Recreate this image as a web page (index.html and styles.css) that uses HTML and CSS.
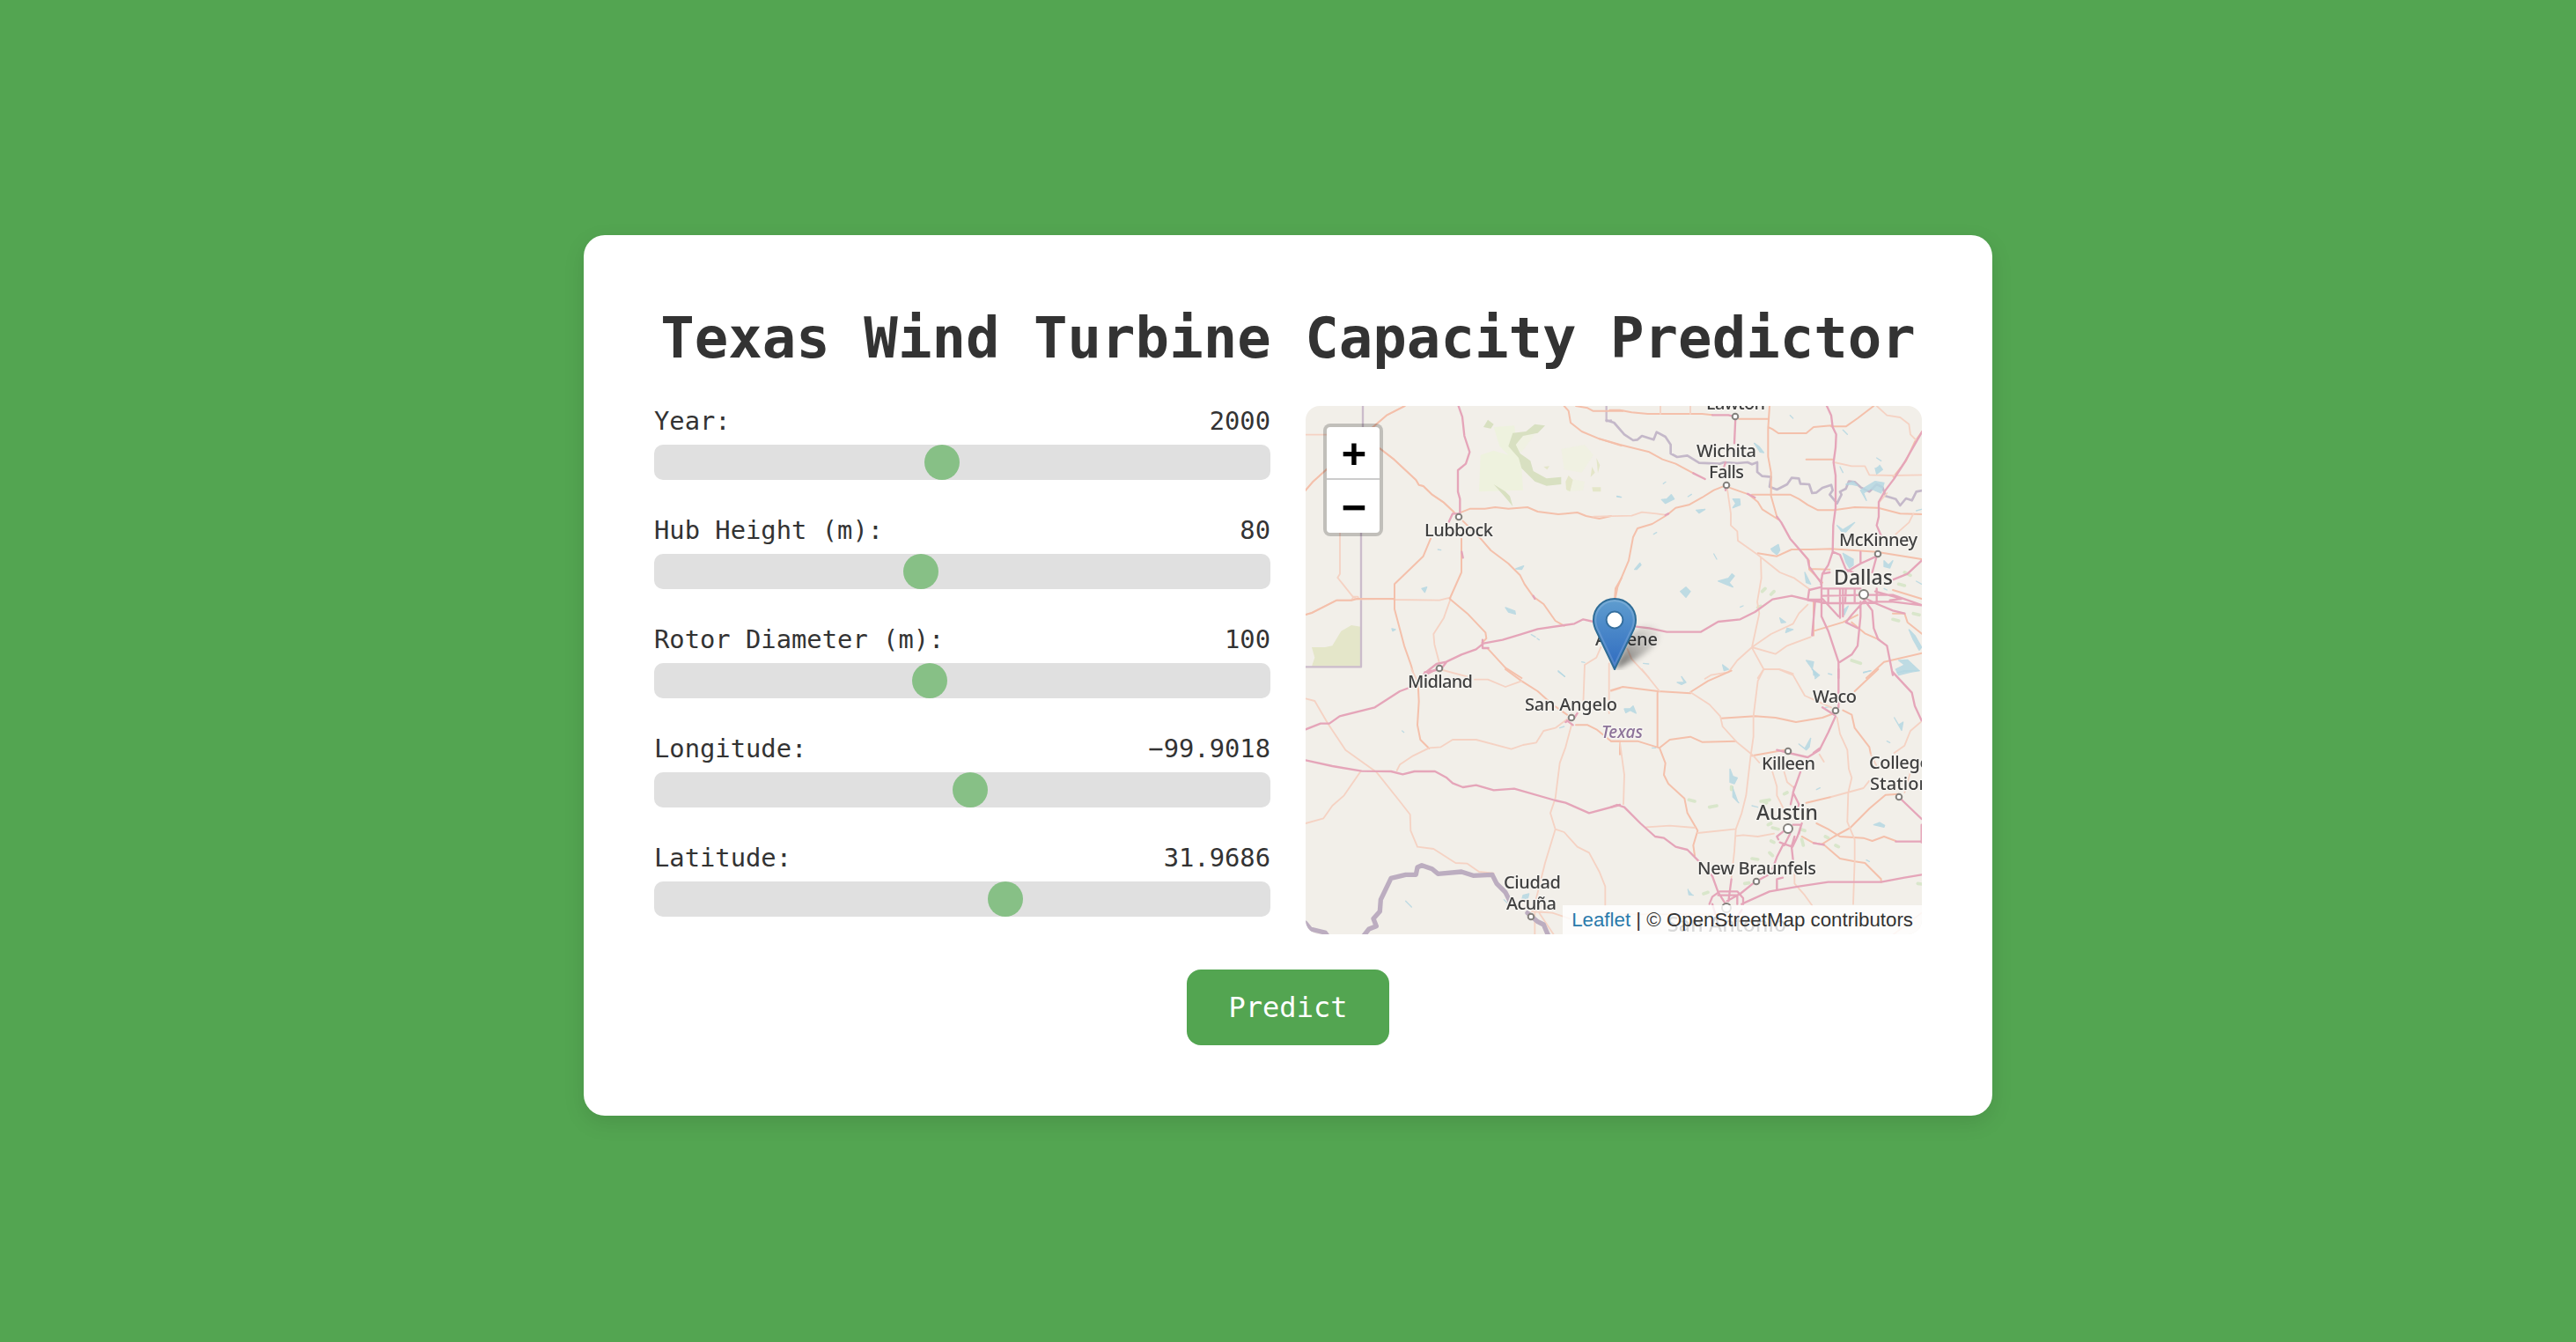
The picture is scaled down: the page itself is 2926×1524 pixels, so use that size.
FILE: index.html
```html
<!DOCTYPE html>
<html lang="en">
<head>
<meta charset="utf-8">
<title>Texas Wind Turbine Capacity Predictor</title>
<link rel="stylesheet" href="styles.css">
</head>
<body>
<main class="card">
  <h1 class="title">Texas Wind Turbine Capacity Predictor</h1>
  <div class="columns">
    <form class="sliders">
      <div class="field">
        <div class="field-head"><label>Year:</label><output>2000</output></div>
        <div class="track"><span class="thumb" style="margin-left:307px"></span></div>
      </div>
      <div class="field">
        <div class="field-head"><label>Hub Height (m):</label><output>80</output></div>
        <div class="track"><span class="thumb" style="margin-left:283px"></span></div>
      </div>
      <div class="field">
        <div class="field-head"><label>Rotor Diameter (m):</label><output>100</output></div>
        <div class="track"><span class="thumb" style="margin-left:293px"></span></div>
      </div>
      <div class="field">
        <div class="field-head"><label>Longitude:</label><output>−99.9018</output></div>
        <div class="track"><span class="thumb" style="margin-left:339px"></span></div>
      </div>
      <div class="field">
        <div class="field-head"><label>Latitude:</label><output>31.9686</output></div>
        <div class="track"><span class="thumb" style="margin-left:379px"></span></div>
      </div>
    </form>

    <div class="map">
      <svg class="tiles" viewBox="0 0 700 600" width="700" height="600">
        <!-- north-west -->
        <g transform="translate(-3 -11) scale(.33333)">
          <path class="wood" d="M30 855H75L100 850 130 800 165 780 197 785V920H30L40 890Z"/>
          <path class="grass" d="M650 105L720 100 735 200 745 240 750 320 600 325 605 200 650 185 700 200 670 170Z"/>
          <path class="grass" d="M720 130L790 130 745 190 700 190ZM900 280L960 290 955 320 900 325ZM880 180L960 165 990 200 950 260 890 250Z" opacity=".6"/>
          <path class="wood2" d="M615 105L630 80 650 95 640 110ZM715 125L760 120 790 95 825 100 800 125 750 135 725 165 740 195 775 220 785 255 830 280 880 275 880 300 830 305 790 290 745 245 735 210 700 170ZM650 300L690 325 705 340 715 375 690 345Z"/>
          <path class="wood" d="M895 290L905 270 920 285 910 325 897 318ZM985 310H1015V325H988ZM1000 210L1012 235 1005 262ZM985 240L995 260 980 275ZM820 240L840 238 832 250ZM890 175L900 188ZM950 172L958 180Z"/>
          <path class="water" d="M405 655L422 650 415 668ZM690 720L722 732 724 742 700 735ZM303 792L315 795 306 800ZM725 588L752 578 745 590ZM460 522L470 524ZM778 812L792 820M798 825L805 830M870 935L892 955ZM950 905L960 907M1070 340L1085 344"/>
          <path class="state" d="M204 30V250L198 460V922H0M1034 30V85L1050 82"/>
          <path class="minor" d="M0 131H80M347 33L285 65 235 108M262 178L310 215 385 285 395 302 410 306 440 335 480 362 515 395M85 245L35 290 5 325M126 465V605L118 618 170 683 185 692 310 690M310 693L465 695 502 686M503 690L480 755 445 810 448 845 465 910M5 745L30 738 115 695 165 695 172 683 187 683 190 690"/>
          <path class="road" d="M347 33L285 65 235 108M262 178L310 215 385 285 395 302 410 306 440 335 480 362 515 395M85 245L35 290 5 325M5 745L30 738 115 695 165 695 185 690H310M540 395L570 383H620L655 378 700 383 765 378 800 393 870 402 935 396 965 408 1010 417 1050 408M435 485L410 545 312 640V725L345 850 368 915 375 940M540 485L540 600 500 690 560 740 622 805 625 825 610 840M545 425L610 490 640 525 700 570 740 610 755 640 785 683 820 708 860 765 890 782M630 860L690 925 745 960M1085 620L1065 655 1062 695M890 33L905 50 912 90 950 120 1010 145 1085 168M930 33L970 40 988 50H1090"/>
          <path class="minor" d="M1015 855L1000 890 960 915 955 1050M1043 910V1080M465 930L560 955M370 930L395 980"/>
          <path class="major" d="M530 33L543 70 550 135 568 190 555 230 528 252V325L535 350V400M535 400L510 400 497 428M541 530L545 550M785 680L790 690M413 945L455 912 488 905 540 880 590 862 615 842 680 830 740 812 800 793 890 780 925 775 955 760 990 768M415 940L470 930 488 907M612 830V858H632"/>
        </g>
        <!-- north-east -->
        <g transform="translate(347 -11) scale(.33333)">
          <path class="river" d="M-16 82L10 90 45 130 75 150 90 148 105 135 145 148 155 122 185 138 203 165V195L225 207 260 202 300 227 370 230 385 225 430 228 465 225 480 232 498 225V258L515 272 545 275 540 308 565 318 600 300 615 278 640 280 645 298 675 300 685 330 700 328 720 312 750 302 755 320 745 335 770 365 785 335 780 325 800 315 810 290 830 292 850 310 880 325 905 300 925 310 935 340 970 350 985 372 1005 348 1025 355 1040 325 1065 320"/>
          <path class="water" d="M488 160L505 172 520 192 508 190ZM172 352L190 350 205 335 215 350 185 365ZM415 350L438 350 440 370 415 380 425 365ZM290 388L320 385 300 398ZM80 590L98 568 102 575 88 590ZM365 630L400 620 412 605 420 612 402 635 415 650 390 640ZM236 665L255 650 270 665 255 685ZM545 520L570 505 575 525 565 540 550 528ZM350 537L360 555M145 470L155 464M770 440L790 455 830 430 800 462 785 460ZM790 535L825 555 825 575 812 585 800 565ZM930 560L945 575 960 560 950 585 930 580ZM660 600L680 640 665 635ZM905 210L920 220M915 235L925 250 905 265 900 245M800 300L825 290 840 305 820 300ZM850 320L900 290 930 295 920 330 885 315 860 330 870 355ZM780 240L790 260M610 65L620 75M790 115L805 130M575 755L595 770 580 772ZM600 790L620 795 595 805ZM665 900L690 905 685 930 705 950 690 950 690 935ZM380 915L400 930 385 935ZM1015 795L1035 815 1058 855 1050 865 1030 830ZM970 930L1000 915 980 900 1010 898 1050 935 1020 940 980 950ZM860 940L885 935M178 298L186 292M262 342L274 334M20 342L32 344M440 718L450 714M110 910L128 912M1040 390L1058 385M1040 630L1058 640M930 655L940 660M790 730L808 715 795 745Z"/>
          <path class="green" d="M515 665L525 655M545 675L555 665M500 720L510 715M1000 600L1020 610M980 640L1000 645M960 760L980 765M1030 740L1050 745M820 900L850 910"/>
          <path class="road" d="M-5 47H30L70 55 125 60H310L345 64M-40 145L30 165 130 190 175 215 220 230 280 262M540 33L535 110V205L545 260V340L565 410M435 77H535M535 105L550 112 570 126H665L690 105 750 100M750 103H800L840 75 895 33M1060 120L1035 155 1005 220 962 275M665 215H755M388 305L350 320 310 345 265 370 220 380 190 405 140 435 90 450 75 480 60 560 22 650 12 700M400 310L470 335 500 360 515 385 570 420M480 335H610L640 350 670 370 705 388 760 388 830 378 910 380 985 400 1060 402M500 535L565 545 615 522H680L750 520 905 530 1058 555M640 520L675 560V590L720 635M675 588L745 590M690 695L690 815M690 800L790 770 840 745M820 770L865 808 915 830M960 740L1000 740 1010 770 1060 810M960 660L1058 690M870 960L930 905 1060 875"/>
          <path class="minor" d="M168 33V60M270 33V60M905 33L940 65 985 72 1015 95 1020 130 1040 150M760 225L820 238H865L880 268 960 270 1058 268M940 330L915 360M-60 410L70 407 105 395 155 400 190 405M395 310L408 400V440L430 460 432 492 500 540 575 600 625 620 680 660M510 550L512 620 498 700 505 740 480 855M1030 400L1015 430 970 470M480 855L545 810 620 775 640 740 670 710M480 855L560 878 600 850 680 820M480 855L430 900 400 940 340 950 320 962M480 857L520 930 575 930 620 945M520 930L500 960M55 860L70 895 130 960"/>
          <path class="major" d="M424 70L420 160M390 225L385 240M390 300V320M280 262L320 282M345 64H400L424 70M465 332L490 345M565 410L580 430 610 485 640 520 670 555 675 580 715 635M735 33L750 65 755 105 767 130 765 175 758 225 765 270V380L757 440 755 530 740 575 720 605 715 640M1060 120L1000 225 965 280 935 320 912 360V410L905 440 920 475M755 530L780 540 800 590 825 600M850 530V570M905 545L850 570 800 600M905 545L890 600M720 605L745 600M86 785L130 790 190 803H305L365 768 440 760 490 735 550 692 615 680 670 693H715M717 650L675 660 670 695 740 705H860L910 700H960L1058 712M717 655H850M717 680L860 677H960L1060 712M790 655V750M800 655L798 700M905 655V700M740 655V705M830 655V705M717 620V750L740 800 775 905V960M860 690L890 730 895 790 910 828 940 850 960 950M850 700V750L840 850 820 880 780 905M720 690L775 750M870 690L900 705 960 730 1000 740M900 665L990 690 950 695M800 770L820 745 860 700M780 655V755M800 770L840 790M695 700L685 815M960 625L1010 605 1058 560M185 405L195 400"/>
        </g>
        <!-- south-west -->
        <g transform="translate(-3 299) scale(.33333)">
          <path class="water" d="M870 8L892 25M338 210L344 215M350 790L370 810M685 785L695 795M750 770L770 765 765 785 745 790ZM875 200L890 195"/>
          <path class="road" d="M392 50L395 110 390 190 400 240 430 270M745 40L800 75 850 120 900 155M930 190H970L1000 205 1050 245 1080 245V290M745 40L690 0"/>
          <path class="minor" d="M9 100L40 108 85 185 145 275 250 350 330 450 365 495 367 550 390 605 445 612 520 660 560 662 600 690 650 695M9 525L70 508 100 465 140 430 195 350M320 345L330 325 375 295 430 268 470 265 510 240H590L710 272 750 258 795 250 820 210 860 200 900 170M585 35H630L690 60 745 40M915 190L895 265 875 320 860 440 843 490 860 545 825 660 810 720 790 800V905M860 545L890 555 935 605 975 625 1010 690 1030 740V805M780 825L850 830 910 850M805 830L855 905M1080 65L1050 75"/>
          <path class="major" d="M9 205L60 185H90L125 160 245 130 330 75 370 60 415 20 455 0M9 310L100 330 200 347 300 348 340 358 380 348H450L490 370 510 388 545 402 590 395 650 412 720 407 860 447 895 455 975 490 1080 462M895 180L925 165 935 150M900 175L920 190"/>
          <path class="border" d="M9 865L25 885 75 897 85 910M205 910L225 885 250 875 240 850 262 825 265 785 300 712 350 700H385L390 675 405 668 440 680 460 697 540 690 580 703 645 700 660 730 690 760 705 790M765 830L800 860 820 870 835 905"/>
        </g>
        <!-- south-east -->
        <g transform="translate(347 299) scale(.33333)">
          <path class="water" d="M225 45L250 45 240 25 255 45 240 52ZM45 135L65 135 75 125 85 150 65 140 50 148ZM405 340L415 365 430 370 420 390 405 385ZM415 400V435L435 455M640 255L660 270 680 235 675 265 665 275ZM700 410L712 404M895 530L915 522 932 532 930 538ZM965 165L980 190 995 180 990 208ZM685 0L710 20 695 32M740 15L752 18M860 12L885 5M975 12L1000 5 1050 5M940 245L950 250M730 130L745 128M870 650L880 655M262 750L265 768 280 770M480 465L500 470M140 268H152"/>
          <path class="green" d="M265 445L285 450M335 470L360 465M510 450L540 445M520 460L530 455M590 425L600 420M545 585L555 590M540 625L550 635M535 530L545 525M550 540L570 545M315 765L330 760M480 645L500 648M650 580L655 600M730 570L740 575M765 600L775 605M455 730L470 728M410 400V410M645 545L660 550M1045 730L1058 732"/>
          <path class="road" d="M270 78L330 40 410 5M0 72L40 60 160 75 270 82M158 80V265M375 167L490 160 560 165 630 180 720 165 760 150M165 268L200 240 270 230 310 248 425 245M0 245H90L165 268 185 320 180 360 195 390 250 440 260 490 295 550 280 600 285 635M480 295L590 275M790 140L820 155 830 200 880 265 885 290M830 75L910 0M665 455L750 435M980 425L935 428 880 475 815 540 760 570 720 595M700 525L740 545 780 570 860 575 890 585 930 570 970 585M650 570L690 592 725 598 780 645 830 655 865 660 920 715V725"/>
          <path class="minor" d="M105 0L165 75M270 78L335 120 372 160 380 195 430 250 485 295M520 0H570L620 20 660 90 750 130M520 0L500 40 485 160 485 230 475 300 460 430 445 490 425 545 420 620 410 710M30 250L45 360 42 460M120 538L200 533 285 540M295 558L420 545M425 568L450 565 500 570 555 560M770 165L780 220 805 275 810 340 820 370 808 420 805 520 830 580V650L825 800M885 290L910 340M1055 180L1020 210 1000 260 965 285M485 295L505 318M550 350L565 400V430L585 470M590 350L600 385 625 405M750 435L860 405 880 380M625 690V730L660 770 685 805M1020 350L1000 420M710 290L725 315M0 835H400M960 905L1058 830"/>
          <path class="major" d="M775 0V130M765 160L740 215 710 275 670 300 605 285 565 275M690 285L710 270M960 10L1025 80 1035 125 1058 175M645 350L620 420 640 460 635 475M625 400L612 460M980 435L1058 510M0 470L20 462 45 470 100 525 150 570 180 575 220 605 260 615 300 655 345 705 365 760 390 800M585 600L565 640 550 680M650 525L635 570 618 605 575 590M570 580L565 570 590 550M610 560L590 600M625 570L615 605 620 650M620 530H648L640 560M555 690L490 725 440 765 395 790M445 800L540 757 640 740 740 725H920L1000 710 1058 700M585 710L565 715V750M335 800L345 775 370 757H430L450 780V800M410 715L400 790M365 770H430V800M345 800L360 850 420 860 445 820M970 587H1058M1058 530V590M720 130L760 155M690 592L725 598"/>
        </g>
        <!-- town markers -->
        <g class="towns">
          <circle cx="174" cy="126" r="3.3"/><circle cx="152" cy="298" r="3.3"/><circle cx="488" cy="12" r="3.3"/><circle cx="478" cy="90" r="3.3"/><circle cx="650" cy="168" r="3.3"/><circle cx="634" cy="214" r="5"/><circle cx="302" cy="354" r="3.3"/><circle cx="602" cy="346" r="3.3"/><circle cx="548" cy="392" r="3.3"/><circle cx="674" cy="444" r="3.3"/><circle cx="548" cy="480" r="5"/><circle cx="512" cy="540" r="3.3"/><circle cx="478" cy="570" r="5"/><circle cx="256" cy="580" r="3.3"/>
        </g>
        <!-- place names -->
        <g class="names">
          <text x="135" y="148" textLength="78">Lubbock</text>
          <text x="116" y="320" textLength="74">Midland</text>
          <text x="329" y="272" textLength="71">Abilene</text>
          <text x="455" y="4" textLength="67">Lawton</text>
          <text x="444" y="58" textLength="68">Wichita</text>
          <text x="458" y="82" textLength="40">Falls</text>
          <text x="606" y="159" textLength="89">McKinney</text>
          <text class="city" x="600" y="203" textLength="67">Dallas</text>
          <text x="249" y="346" textLength="105">San Angelo</text>
          <text class="state-name" x="336" y="377" textLength="47">Texas</text>
          <text x="576" y="337" textLength="50">Waco</text>
          <text x="518" y="413" textLength="61">Killeen</text>
          <text x="640" y="412" textLength="69">College</text>
          <text x="641" y="436" textLength="68">Station</text>
          <text class="city" x="512" y="470" textLength="70">Austin</text>
          <text x="445" y="532" textLength="135">New Braunfels</text>
          <text class="city" x="411" y="597" textLength="135">San Antonio</text>
          <text x="225" y="548" textLength="65">Ciudad</text>
          <text x="228" y="572" textLength="57">Acuña</text>
        </g>
      </svg>

      <svg class="marker" viewBox="0 0 41 41" width="82" height="82">
        <defs>
          <linearGradient id="pin" x1="0" y1="0" x2="0" y2="1"><stop offset="0" stop-color="#5f9dcf"/><stop offset="1" stop-color="#2f6bc0"/></linearGradient>
          <linearGradient id="shade" x1="0" y1="1" x2="1" y2="0"><stop offset="0" stop-opacity=".6"/><stop offset=".45" stop-opacity=".28"/><stop offset="1" stop-opacity="0"/></linearGradient>
        </defs>
        <path class="marker-shadow" fill="url(#shade)" d="M12.5 40.5L20 24Q27 14 35 16 41 20 35 27 28 34 12.5 40.5Z"/>
        <path d="M12.5.5C5.8.5.5 5.9.5 12.5c0 2.6.8 4.9 2 7.1L12.5 40.5l10-20.9c1.200-2.200 2-4.500 2-7.100C24.500 5.900 19.200.5 12.500.5z" fill="url(#pin)" stroke="#2e6c97" stroke-width="1"/>
        <path d="M12.500 1.600C6.400 1.600 1.600 6.500 1.600 12.500c0 2.400.7 4.600 1.900 6.600L12.500 38l9-18.900c1.200-2 1.900-4.200 1.900-6.600 0-6-4.800-10.900-10.900-10.900z" fill="none" stroke="#fff" stroke-opacity=".15" stroke-width="1.100"/>
        <circle cx="12.500" cy="12.500" r="4.700" fill="#fff" stroke="#356f9f" stroke-width="1"/>
      </svg>

      <div class="zoom">
        <span class="zoom-btn">+</span>
        <span class="zoom-btn">−</span>
      </div>
      <div class="attribution"><a>Leaflet</a> | © OpenStreetMap contributors</div>
    </div>
  </div>
  <button class="predict" type="button">Predict</button>
</main>
</body>
</html>
```
FILE: styles.css
```css
* { box-sizing: border-box; }

body {
  margin: 0;
  min-height: 1524px;
  padding-top: 10px;
  display: flex;
  align-items: center;
  justify-content: center;
  background: #53a551;
  color: #333;
  font-family: "DejaVu Sans Mono", monospace;
}

.card {
  width: 1600px;
  height: 1000px;
  padding: 80px;
  display: flex;
  flex-direction: column;
  align-items: center;
  background: #fff;
  border-radius: 24px;
  box-shadow: 0 8px 24px rgba(0, 0, 0, .1);
}

.title {
  margin: 0 0 40px;
  font-size: 64px;
  line-height: 74px;
  font-weight: 700;
  white-space: nowrap;
}

.columns {
  display: grid;
  grid-template-columns: 700px 700px;
  gap: 40px;
  height: 600px;
}

.sliders { display: flex; flex-direction: column; gap: 40px; }
.field { display: flex; flex-direction: column; gap: 10px; }
.field-head {
  display: flex;
  justify-content: space-between;
  font-size: 28.8px;
  line-height: 34px;
}
.track {
  display: flex;
  height: 40px;
  border-radius: 10px;
  background: #e0e0e0;
}
.thumb {
  width: 40px;
  height: 40px;
  border-radius: 50%;
  background: #87c086;
}

.map {
  position: relative;
  height: 600px;
  overflow: hidden;
  border-radius: 16px;
  background: #f2efe9;
}
.tiles { display: block; filter: blur(.6px); }
.tiles path { fill: none; stroke-linejoin: round; stroke-linecap: round; }
.tiles .wood { fill: #e4e6c9; }
.tiles .wood2 { fill: #d8e0c1; }
.tiles .grass { fill: #eef2de; }
.tiles .water { fill: #b5d7e2; stroke: #b5d7e2; stroke-width: 4; opacity: .85; }
.tiles .green { stroke: #cfe2bd; stroke-width: 11; opacity: .7; }
.tiles .minor { stroke: #f5d2c3; stroke-width: 5.5; }
.tiles .road { stroke: #f4c0ab; stroke-width: 6; }
.tiles .major { stroke: #e5a5b9; stroke-width: 7; }
.tiles .state { stroke: #cbbccb; stroke-width: 7; }
.tiles .river { stroke: #c4b8c9; stroke-width: 8; }
.tiles .border { stroke: #bcadc0; stroke-width: 16; }
.towns circle { fill: #fff; stroke: #84817d; stroke-width: 2; }
.names text {
  font-family: "Noto Sans", sans-serif;
  font-size: 20px;
  font-weight: 500;
  fill: #404040;
  stroke: #f6f4f0;
  stroke-width: 3px;
  stroke-linejoin: round;
  paint-order: stroke;
}
.names .city { font-size: 23px; }
.names .state-name { font-size: 19px; font-style: italic; fill: #8c7299; }

.marker { position: absolute; left: 326px; top: 218px; }
.marker-shadow { filter: blur(1.6px); }

.zoom {
  position: absolute;
  left: 20px;
  top: 20px;
  width: 68px;
  border: 4px solid rgba(0, 0, 0, .2);
  border-radius: 8px;
  background: #fff;
  background-clip: padding-box;
}
.zoom-btn {
  display: flex;
  height: 60px;
  align-items: center;
  justify-content: center;
  padding: 10px 0 0 2px;
  color: #000;
  font: 700 49px/50px "Liberation Mono", monospace;
}
.zoom-btn:first-child { border-bottom: 2px solid #ccc; }

.attribution {
  position: absolute;
  right: 0;
  bottom: 0;
  padding: 0 10px;
  background: rgba(255, 255, 255, .8);
  font: 22.3px/33px "Liberation Sans", sans-serif;
  white-space: nowrap;
}
.attribution a { color: #2a7aab; }

.predict {
  margin: 40px 0 0;
  padding: 24px 48px;
  border: 0;
  border-radius: 16px;
  background: #53a551;
  color: #fff;
  font: 32px/38px "DejaVu Sans Mono", monospace;
}
```
